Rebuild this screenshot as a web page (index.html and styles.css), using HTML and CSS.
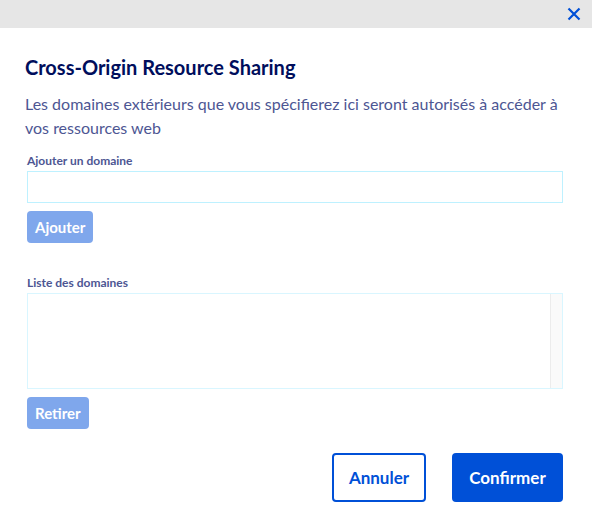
FILE: index.html
```html
<!DOCTYPE html>
<html lang="fr">
<head>
<meta charset="utf-8">
<link rel="stylesheet" href="styles.css">
</head>
<body>
<div class="modal">
  <div class="topbar">
    <button class="close" aria-label="Fermer">
      <svg width="14" height="14" viewBox="0 0 14 14"><path d="M1.5 1.5 L12.5 12.5 M12.5 1.5 L1.5 12.5" stroke="#0050d7" stroke-width="2.2" stroke-linecap="butt"/></svg>
    </button>
  </div>
  <div class="content">
    <h1 class="title">Cross-Origin Resource Sharing</h1>
    <p class="desc">Les domaines extérieurs que vous spécifierez ici seront autorisés à accéder à vos ressources web</p>
    <label class="label">Ajouter un domaine</label>
    <div class="input"></div>
    <button class="btn-light">Ajouter</button>
    <label class="label label-list">Liste des domaines</label>
    <div class="listbox">
      <div class="list-area"></div>
      <div class="scrollbar"></div>
    </div>
    <button class="btn-light">Retirer</button>
    <div class="actions">
      <button class="btn-outline">Annuler</button>
      <button class="btn-primary">Confirmer</button>
    </div>
  </div>
</div>
</body>
</html>
```
FILE: styles.css
```css
* { box-sizing: border-box; }
html, body { margin: 0; padding: 0; background: #fff; }
body { font-family: Lato, "Open Sans", sans-serif; width: 592px; height: 520px; overflow: hidden; }
.topbar { height: 28px; background: #e6e6e6; display: flex; justify-content: flex-end; align-items: center; padding-right: 11px; }
.close { border: 0; background: none; padding: 0; width: 14px; height: 14px; display: flex; }
.content { padding: 0 29px 0 27px; display: flex; flex-direction: column; }
.title { margin: 27px 0 0 -2px; font-size: 20px; line-height: 24px; font-weight: 700; color: #000e5c; }
.desc { margin: 13px 0 0 -2px; font-size: 16px; line-height: 24px; color: #4d5693; }
.label { margin-top: 13px; font-size: 12px; line-height: 15px; font-weight: 700; color: #4d5693; }
.label-list { margin-top: 32px; }
.input { margin-top: 3px; height: 32px; border: 1px solid #bef1ff; }
.btn-light { align-self: flex-start; margin-top: 8px; height: 32px; padding: 0 8px; border: 0; border-radius: 4px; background: #7fa7ec; color: #fff; font-family: inherit; font-size: 15px; font-weight: 700; }
.listbox { margin-top: 3px; height: 96px; border: 1px solid #d9f6ff; display: flex; }
.list-area { flex: 1; }
.scrollbar { width: 12px; background: #fafafa; border-left: 1px solid #ececec; }
.actions { display: flex; justify-content: flex-end; gap: 26px; margin-top: 24px; }
.btn-outline, .btn-primary { height: 49px; border-radius: 4px; font-family: inherit; font-size: 17px; font-weight: 700; }
.btn-outline { width: 94px; background: #fff; border: 2px solid #0050d7; color: #0050d7; }
.btn-primary { width: 111px; background: #0050d7; border: 0; color: #fff; }
```
